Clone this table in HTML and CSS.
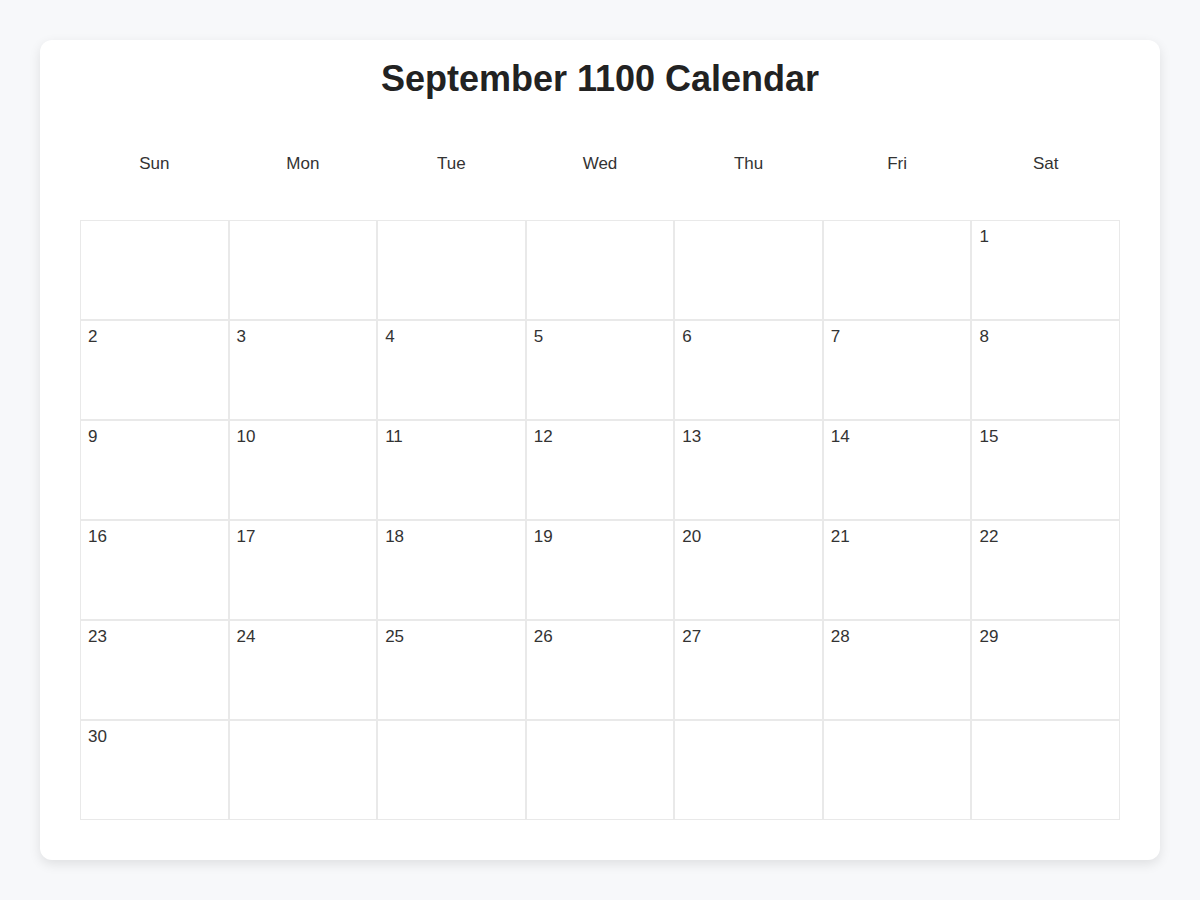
FILE: index.html
```html
<!DOCTYPE html>
<html>
<head>
<meta charset="utf-8">
<link rel="stylesheet" href="styles.css">
</head>
<body>
<div class="card">
  <h1 class="title">September 1100 Calendar</h1>
  <div class="weekdays">
    <div class="wd">Sun</div><div class="wd">Mon</div><div class="wd">Tue</div><div class="wd">Wed</div><div class="wd">Thu</div><div class="wd">Fri</div><div class="wd">Sat</div>
  </div>
  <div class="grid">
    <div class="cell"></div><div class="cell"></div><div class="cell"></div><div class="cell"></div><div class="cell"></div><div class="cell"></div><div class="cell">1</div>
    <div class="cell">2</div><div class="cell">3</div><div class="cell">4</div><div class="cell">5</div><div class="cell">6</div><div class="cell">7</div><div class="cell">8</div>
    <div class="cell">9</div><div class="cell">10</div><div class="cell">11</div><div class="cell">12</div><div class="cell">13</div><div class="cell">14</div><div class="cell">15</div>
    <div class="cell">16</div><div class="cell">17</div><div class="cell">18</div><div class="cell">19</div><div class="cell">20</div><div class="cell">21</div><div class="cell">22</div>
    <div class="cell">23</div><div class="cell">24</div><div class="cell">25</div><div class="cell">26</div><div class="cell">27</div><div class="cell">28</div><div class="cell">29</div>
    <div class="cell">30</div><div class="cell"></div><div class="cell"></div><div class="cell"></div><div class="cell"></div><div class="cell"></div><div class="cell"></div>
  </div>
</div>
</body>
</html>
```
FILE: styles.css
```css
html, body {
  margin: 0;
  padding: 0;
}
body {
  background: #f7f8fa;
  font-family: "Liberation Sans", Arial, sans-serif;
  color: #333;
  padding: 40px;
}
.card {
  background: #fff;
  border-radius: 12px;
  box-shadow: 0 4px 12px rgba(0, 0, 0, 0.1);
  padding: 18px 40px 40px;
}
.title {
  margin: 0;
  text-align: center;
  font-size: 36px;
  line-height: 41px;
  font-weight: bold;
  color: #222;
}
.weekdays {
  display: grid;
  grid-template-columns: repeat(7, 1fr);
  margin-top: 45px;
  margin-bottom: 36px;
}
.wd {
  text-align: center;
  font-size: 17px;
  line-height: 20px;
  padding: 10px 0;
}
.grid {
  display: grid;
  grid-template-columns: repeat(7, 1fr);
  grid-auto-rows: 100px;
}
.cell {
  border: 1px solid #e9e9e9;
  padding: 6px 7px;
  font-size: 17px;
  line-height: 20px;
}
```
